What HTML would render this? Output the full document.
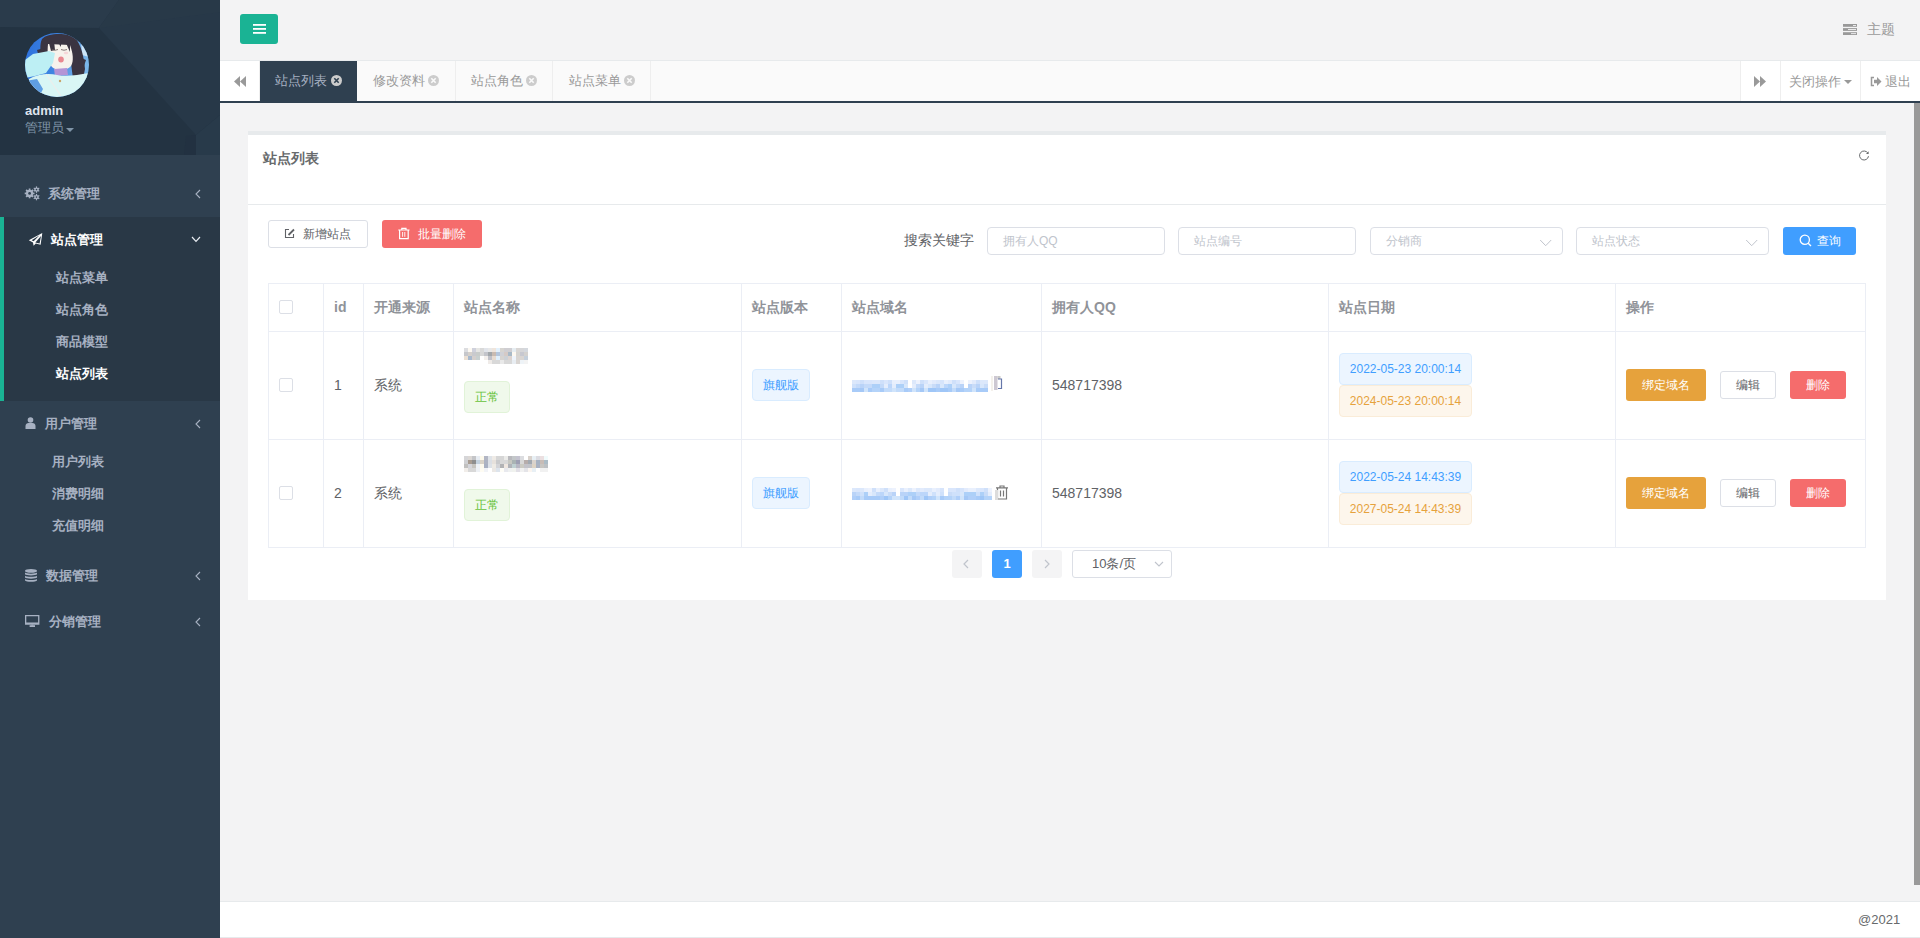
<!DOCTYPE html>
<html><head><meta charset="utf-8"><title>站点列表</title>
<style>
*{box-sizing:border-box;margin:0;padding:0}
html,body{width:1920px;height:938px;overflow:hidden}
body{position:relative;background:#f3f3f4;font-family:"Liberation Sans",sans-serif;font-size:13px;color:#676a6c}
.abs{position:absolute}
/* sidebar */
#side{position:absolute;left:0;top:0;width:220px;height:938px;background:#2f4050}
#navhead{position:absolute;left:0;top:0;width:220px;height:155px;background:#243240;overflow:hidden}
.menu{position:absolute;left:0;width:220px;color:#a7b1c2;font-weight:bold;font-size:13px;line-height:16px;white-space:nowrap}
.sub{position:absolute;color:#a7b1c2;font-weight:bold;font-size:13px;line-height:16px;white-space:nowrap}
.arr{position:absolute;left:194px;width:8px;height:10px}
/* top */
#topbar{position:absolute;left:220px;top:0;width:1700px;height:61px;background:#f3f3f4;border-bottom:1px solid #e7eaec}
#tabs{position:absolute;left:220px;top:61px;width:1700px;height:42px;background:#fafafa;border-bottom:2px solid #2f4050}
.tab{position:absolute;top:0;height:40px;line-height:40px;color:#999;font-size:13px;border-right:1px solid #eee;white-space:nowrap}
#card{position:absolute;left:248px;top:131px;width:1638px;height:469px;background:#fff;border-top:4px solid #e7eaec}
#footer{position:absolute;left:220px;top:901px;width:1700px;height:37px;background:#fff;border-top:1px solid #e7eaec}
.btn{position:absolute;border-radius:3px;font-size:12px;text-align:center;white-space:nowrap}
.inp{position:absolute;top:227px;height:28px;border:1px solid #dcdfe6;border-radius:4px;background:#fff;color:#c0c4cc;font-size:12px;line-height:26px;padding-left:15px;white-space:nowrap}
.hl{position:absolute;background:#ebeef5}
.th{position:absolute;top:299px;font-weight:bold;color:#909399;font-size:14px;line-height:16px;white-space:nowrap}
.td{position:absolute;color:#606266;font-size:14px;line-height:16px;white-space:nowrap}
.cb{position:absolute;left:279px;width:14px;height:14px;border:1px solid #dcdfe6;border-radius:2px;background:#fff}
.tag{position:absolute;height:32px;line-height:30px;border:1px solid;border-radius:4px;font-size:12px;text-align:center;white-space:nowrap}
.tb{background:#ecf5ff;border-color:#d9ecff;color:#409eff}
.tw{background:#fdf6ec;border-color:#faecd8;color:#e6a23c}
.tg{background:#f0f9eb;border-color:#e1f3d8;color:#67c23a}
</style></head><body>

<div id="side">
  <div id="navhead">
    <svg class="abs" style="left:0;top:0" width="220" height="155" viewBox="0 0 220 155">
      <rect width="220" height="155" fill="#233342"/>
      <polygon points="0,0 119,0 99,28 0,27" fill="#2a3b4b"/>
      <polygon points="119,0 220,0 220,115 196,135 99,28" fill="#273848"/>
      <polygon points="119,0 220,0 220,12 99,28" fill="#293a4a" opacity="0.6"/>
      
      <polygon points="196,135 220,115 220,155 196,155" fill="#283a4a"/>
      <polygon points="186,136 196,135 196,155 184,155" fill="#223141"/>
    </svg>
    <svg class="abs" style="left:25px;top:33px" width="64" height="64" viewBox="0 0 64 64">
      <defs><clipPath id="cc"><circle cx="32" cy="32" r="32"/></clipPath>
      <linearGradient id="sky" x1="0" y1="0" x2="1" y2="0.2"><stop offset="0" stop-color="#2b6fdc"/><stop offset="0.55" stop-color="#3f86e2"/><stop offset="1" stop-color="#7ab6ea"/></linearGradient></defs>
      <g clip-path="url(#cc)">
        <rect width="64" height="64" fill="url(#sky)"/>
        <path d="M56,8 L64,6 L64,24 L57,22Z" fill="#e4f2fa" opacity="0.8"/>
        <path d="M17,6 C22,0 42,-1 50,5 C56,11 59,24 60,36 L58,46 L48,46 C47,38 46,30 45,24 L44,14 L26,12 C24,16 22,20 21,24 L16,24 C15,17 15,10 17,6Z" fill="#3a3441"/>
        <path d="M12,17 L19,15 L21,22 L14,24Z" fill="#3a3441"/>
        <path d="M54,24 L61,27 L59,33 L53,30Z" fill="#3a3441"/>
        <path d="M23,11 L45,12 C48,20 49,28 46,33 C42,38 31,38 27,34 C23,29 22,20 23,11Z" fill="#f7f2ec"/>
        <path d="M24,10 L29,8 L30,17 L26,18Z M33,8 L37,8 L35.5,14Z M41,10 L45,11 L45,19Z" fill="#3a3441"/>
        <path d="M27,16.5 Q30,18 33,16.5 M36,16.5 Q39,18 42,16.5" stroke="#6a5a5a" stroke-width="0.8" fill="none"/>
        <ellipse cx="41" cy="20" rx="2.2" ry="1.2" fill="#f6d6d8"/>
        <ellipse cx="36" cy="26.5" rx="2.8" ry="3" fill="#e98890"/>
        <path d="M29,36 L42,35 L43,42 L30,43Z" fill="#b495d6"/>
        <path d="M4,46 C12,41 24,40 32,42 C42,44 52,42 64,40 L64,64 L0,64Z" fill="#d9f6f5"/>
        <path d="M0,48 L12,46 L18,56 L14,64 L0,64Z" fill="#5f9ee3"/>
        <path d="M6,55 L18,61 L13,64 L5,61Z" fill="#f4fbfc"/>
        <path d="M0,27 L8,21 L24,18 L30,20 L28,30 L21,40 L10,43 L0,45Z" fill="#bdeff4"/>
        <path d="M21,41 L36,63" stroke="#eceeec" stroke-width="1.3"/>
        <circle cx="35" cy="48" r="1.2" fill="#c9a46a"/>
      </g>
    </svg>
    <div class="abs" style="left:25px;top:103px;color:#dfe4ed;font-weight:bold;font-size:13px;line-height:16px">admin</div>
    <div class="abs" style="left:25px;top:120px;color:#8095a8;font-size:13px;line-height:16px">管理员</div>
    <div class="abs" style="left:66px;top:128px;width:0;height:0;border-left:4px solid transparent;border-right:4px solid transparent;border-top:4px solid #8095a8"></div>
  </div>
  <!-- 系统管理 -->
  <svg class="abs" style="left:24px;top:186px" width="17" height="16" viewBox="0 0 17 16"><circle cx="5.6" cy="7.4" r="3.6" fill="#a7b1c2"/><rect x="4.75" y="2.50" width="1.7" height="2.10" fill="#a7b1c2" transform="rotate(0.0 5.6 7.4)"/><rect x="4.75" y="2.50" width="1.7" height="2.10" fill="#a7b1c2" transform="rotate(45.0 5.6 7.4)"/><rect x="4.75" y="2.50" width="1.7" height="2.10" fill="#a7b1c2" transform="rotate(90.0 5.6 7.4)"/><rect x="4.75" y="2.50" width="1.7" height="2.10" fill="#a7b1c2" transform="rotate(135.0 5.6 7.4)"/><rect x="4.75" y="2.50" width="1.7" height="2.10" fill="#a7b1c2" transform="rotate(180.0 5.6 7.4)"/><rect x="4.75" y="2.50" width="1.7" height="2.10" fill="#a7b1c2" transform="rotate(225.0 5.6 7.4)"/><rect x="4.75" y="2.50" width="1.7" height="2.10" fill="#a7b1c2" transform="rotate(270.0 5.6 7.4)"/><rect x="4.75" y="2.50" width="1.7" height="2.10" fill="#a7b1c2" transform="rotate(315.0 5.6 7.4)"/><circle cx="5.6" cy="7.4" r="1.4" fill="#2f4050"/><circle cx="12.5" cy="3.6" r="2.2" fill="#a7b1c2"/><rect x="11.90" y="0.40" width="1.2" height="1.80" fill="#a7b1c2" transform="rotate(0.0 12.5 3.6)"/><rect x="11.90" y="0.40" width="1.2" height="1.80" fill="#a7b1c2" transform="rotate(60.0 12.5 3.6)"/><rect x="11.90" y="0.40" width="1.2" height="1.80" fill="#a7b1c2" transform="rotate(120.0 12.5 3.6)"/><rect x="11.90" y="0.40" width="1.2" height="1.80" fill="#a7b1c2" transform="rotate(180.0 12.5 3.6)"/><rect x="11.90" y="0.40" width="1.2" height="1.80" fill="#a7b1c2" transform="rotate(240.0 12.5 3.6)"/><rect x="11.90" y="0.40" width="1.2" height="1.80" fill="#a7b1c2" transform="rotate(300.0 12.5 3.6)"/><circle cx="12.5" cy="3.6" r="0.8" fill="#2f4050"/><circle cx="12.5" cy="11.1" r="2.2" fill="#a7b1c2"/><rect x="11.90" y="7.90" width="1.2" height="1.80" fill="#a7b1c2" transform="rotate(0.0 12.5 11.1)"/><rect x="11.90" y="7.90" width="1.2" height="1.80" fill="#a7b1c2" transform="rotate(60.0 12.5 11.1)"/><rect x="11.90" y="7.90" width="1.2" height="1.80" fill="#a7b1c2" transform="rotate(120.0 12.5 11.1)"/><rect x="11.90" y="7.90" width="1.2" height="1.80" fill="#a7b1c2" transform="rotate(180.0 12.5 11.1)"/><rect x="11.90" y="7.90" width="1.2" height="1.80" fill="#a7b1c2" transform="rotate(240.0 12.5 11.1)"/><rect x="11.90" y="7.90" width="1.2" height="1.80" fill="#a7b1c2" transform="rotate(300.0 12.5 11.1)"/><circle cx="12.5" cy="11.1" r="0.8" fill="#2f4050"/></svg>
  <div class="menu" style="left:48px;top:186px">系统管理</div>
  <svg class="arr" style="top:189px" viewBox="0 0 8 10"><path d="M6,1 L2,5 L6,9" stroke="#a7b1c2" stroke-width="1.1" fill="none"/></svg>
  <!-- active -->
  <div class="abs" style="left:0;top:217px;width:220px;height:184px;background:#293846;border-left:4px solid #1ab394"></div>
  <svg class="abs" style="left:27px;top:231px" width="17" height="17" viewBox="0 0 17 17"><path d="M15.3,2 L1.8,9.3 L6,11.4 L6.6,14.8 L8.8,12.6 L13.6,13.8 Z" fill="#fff"/><path d="M14,5 L8.3,11.6 L12.6,12.5 Z M12.6,4.2 L4.6,9.2 L6.6,10.2 Z" fill="#293846"/></svg>
  <div class="menu" style="left:51px;top:232px;color:#fff">站点管理</div>
  <svg class="abs" style="top:236px;left:191px" width="10" height="7" viewBox="0 0 10 7"><path d="M1,1 L5,5.3 L9,1" stroke="#e8ecf2" stroke-width="1.2" fill="none"/></svg>
  <div class="sub" style="left:56px;top:270px">站点菜单</div>
  <div class="sub" style="left:56px;top:302px">站点角色</div>
  <div class="sub" style="left:56px;top:334px">商品模型</div>
  <div class="sub" style="left:56px;top:366px;color:#fff">站点列表</div>
  <!-- 用户管理 -->
  <svg class="abs" style="left:25px;top:417px" width="11" height="12" viewBox="0 0 11 12"><circle cx="5.5" cy="3" r="2.8" fill="#a7b1c2"/><path d="M0.5,12 L0.5,9 C0.5,7 2,6 3.5,6 L7.5,6 C9,6 10.5,7 10.5,9 L10.5,12Z" fill="#a7b1c2"/></svg>
  <div class="menu" style="left:45px;top:416px">用户管理</div>
  <svg class="arr" style="top:419px" viewBox="0 0 8 10"><path d="M6,1 L2,5 L6,9" stroke="#a7b1c2" stroke-width="1.1" fill="none"/></svg>
  <div class="sub" style="left:52px;top:454px">用户列表</div>
  <div class="sub" style="left:52px;top:486px">消费明细</div>
  <div class="sub" style="left:52px;top:518px">充值明细</div>
  <!-- 数据管理 -->
  <svg class="abs" style="left:25px;top:569px" width="12" height="13" viewBox="0 0 12 13"><g fill="#a7b1c2"><ellipse cx="6" cy="1.9" rx="6" ry="1.9"/><path d="M0,3.6 C1,5 11,5 12,3.6 V5.3 C11,6.8 1,6.8 0,5.3Z"/><path d="M0,6.8 C1,8.2 11,8.2 12,6.8 V8.5 C11,10 1,10 0,8.5Z"/><path d="M0,10 C1,11.4 11,11.4 12,10 V11.4 C11,13.2 1,13.2 0,11.4Z"/></g></svg>
  <div class="menu" style="left:46px;top:568px">数据管理</div>
  <svg class="arr" style="top:571px" viewBox="0 0 8 10"><path d="M6,1 L2,5 L6,9" stroke="#a7b1c2" stroke-width="1.1" fill="none"/></svg>
  <!-- 分销管理 -->
  <svg class="abs" style="left:25px;top:615px" width="15" height="12" viewBox="0 0 15 12"><path d="M0,0 H14.4 V9.8 H0Z M1.3,1.3 V7.6 H13.1 V1.3Z" fill="#a7b1c2" fill-rule="evenodd"/><rect x="4.6" y="10.2" width="5.4" height="1.8" fill="#a7b1c2"/><rect x="6.3" y="9.6" width="2" height="1" fill="#a7b1c2"/></svg>
  <div class="menu" style="left:49px;top:614px">分销管理</div>
  <svg class="arr" style="top:617px" viewBox="0 0 8 10"><path d="M6,1 L2,5 L6,9" stroke="#a7b1c2" stroke-width="1.1" fill="none"/></svg>
</div>

<div id="topbar">
  <div class="abs" style="left:20px;top:14px;width:38px;height:30px;background:#1ab394;border-radius:3px"></div>
  <svg class="abs" style="left:33px;top:23px" width="13" height="11" viewBox="0 0 13 11"><g fill="#fff"><rect x="0" y="1" width="13" height="1.8"/><rect x="0" y="5" width="13" height="1.8"/><rect x="0" y="9" width="13" height="1.8"/></g></svg>
  <svg class="abs" style="left:1623px;top:24px" width="14" height="11" viewBox="0 0 14 11"><g fill="#999"><rect x="0" y="0" width="14" height="2.8"/><rect x="0" y="4.1" width="14" height="2.8"/><rect x="0" y="8.2" width="14" height="2.8"/></g><g fill="#f3f3f4"><rect x="10" y="1" width="3" height="0.9"/><rect x="5" y="5.1" width="8" height="0.9"/><rect x="8" y="9.2" width="5" height="0.9"/></g></svg>
  <div class="abs" style="left:1647px;top:21px;color:#999;font-size:14px;line-height:16px">主题</div>
</div>
<div id="tabs">
  <div class="abs" style="left:0;top:0;width:40px;height:40px;background:#fff;border-right:1px solid #eee"></div>
  <svg class="abs" style="left:14px;top:15px" width="12" height="11" viewBox="0 0 12 11"><g fill="#999"><path d="M6,0 V11 L0,5.5Z"/><path d="M12,0 V11 L6,5.5Z"/></g></svg>
  <div class="tab" style="left:40px;width:97px;background:#2f4050;color:#a7b1c2;padding-left:15px;border-right:none">站点列表</div>
  <svg class="abs" style="left:111px;top:14px" width="11" height="11" viewBox="0 0 11 11"><circle cx="5.5" cy="5.5" r="5.5" fill="#ccc"/><path d="M3.3,3.3 L7.7,7.7 M7.7,3.3 L3.3,7.7" stroke="#2f4050" stroke-width="1.6"/></svg>
  <div class="tab" style="left:137px;width:99px;padding-left:16px">修改资料</div>
  <svg class="abs" style="left:208px;top:14px" width="11" height="11" viewBox="0 0 11 11"><circle cx="5.5" cy="5.5" r="5.5" fill="#ccc"/><path d="M3.3,3.3 L7.7,7.7 M7.7,3.3 L3.3,7.7" stroke="#fafafa" stroke-width="1.6"/></svg>
  <div class="tab" style="left:236px;width:97px;padding-left:15px">站点角色</div>
  <svg class="abs" style="left:306px;top:14px" width="11" height="11" viewBox="0 0 11 11"><circle cx="5.5" cy="5.5" r="5.5" fill="#ccc"/><path d="M3.3,3.3 L7.7,7.7 M7.7,3.3 L3.3,7.7" stroke="#fafafa" stroke-width="1.6"/></svg>
  <div class="tab" style="left:333px;width:98px;padding-left:16px">站点菜单</div>
  <svg class="abs" style="left:404px;top:14px" width="11" height="11" viewBox="0 0 11 11"><circle cx="5.5" cy="5.5" r="5.5" fill="#ccc"/><path d="M3.3,3.3 L7.7,7.7 M7.7,3.3 L3.3,7.7" stroke="#fafafa" stroke-width="1.6"/></svg>
  <div class="abs" style="left:1520px;top:0;width:180px;height:40px;background:#fff;border-left:1px solid #eee"></div>
  <div class="abs" style="left:1560px;top:0;width:1px;height:40px;background:#eee"></div>
  <div class="abs" style="left:1640px;top:0;width:1px;height:40px;background:#eee"></div>
  <svg class="abs" style="left:1534px;top:15px" width="12" height="11" viewBox="0 0 12 11"><g fill="#999"><path d="M0,0 V11 L6,5.5Z"/><path d="M6,0 V11 L12,5.5Z"/></g></svg>
  <div class="abs" style="left:1569px;top:13px;color:#999;font-size:13px;line-height:16px">关闭操作</div>
  <div class="abs" style="left:1624px;top:19px;width:0;height:0;border-left:4px solid transparent;border-right:4px solid transparent;border-top:4px solid #999"></div>
  <svg class="abs" style="left:1650px;top:15px" width="12" height="11" viewBox="0 0 12 11"><path d="M4,1.5 H1.5 V9.5 H4" stroke="#999" stroke-width="1.5" fill="none"/><path d="M4,3.8 H7 V1 L11.5,5.5 L7,10 V7.2 H4Z" fill="#999"/></svg>
  <div class="abs" style="left:1665px;top:13px;color:#999;font-size:13px;line-height:16px">退出</div>
</div>
<div class="abs" style="left:1914px;top:103px;width:6px;height:782px;background:#999"></div>

<div id="card">
  <div class="abs" style="left:15px;top:15px;font-weight:bold;font-size:14px;line-height:16px;color:#676a6c">站点列表</div>
  <svg class="abs" style="left:1611px;top:15px" width="11" height="11" viewBox="0 0 11 11"><path d="M8.8,3 A4.5,4.5 0 1 0 9.5,6.2" stroke="#676a6c" stroke-width="1" fill="none"/><path d="M9.6,1.2 V4 H7Z" fill="#676a6c"/></svg>
</div>
<div class="abs" style="left:248px;top:204px;width:1638px;height:1px;background:#e7eaec"></div>

<!-- toolbar -->
<div class="btn" style="left:268px;top:220px;width:100px;height:28px;border:1px solid #dcdfe6;background:#fff;color:#606266;line-height:26px;padding-left:18px">新增站点</div>
<svg class="abs" style="left:284px;top:228px" width="12" height="11" viewBox="0 0 12 11"><path d="M5,1.5 H1.5 V9.5 H9.5 V6" stroke="#606266" stroke-width="1.1" fill="none"/><path d="M4.5,7 L10,1.5" stroke="#606266" stroke-width="1.8"/></svg>
<div class="btn" style="left:382px;top:220px;width:100px;height:28px;background:#f56c6c;color:#fff;line-height:28px;padding-left:19px">批量删除</div>
<svg class="abs" style="left:398px;top:227px" width="12" height="13" viewBox="0 0 12 13"><path d="M0.3,3 H11.5 M3.8,2.8 V1.3 H8 V2.8 M1.6,3 V11.6 H10.2 V3" stroke="#fff" stroke-width="1.2" fill="none"/><path d="M4.6,5 V9.8 M6.8,5 V9.8" stroke="#fff" stroke-width="0.9"/></svg>

<div class="abs" style="left:904px;top:232px;color:#606266;font-size:14px;line-height:16px">搜索关键字</div>
<div class="inp" style="left:987px;width:178px">拥有人QQ</div>
<div class="inp" style="left:1178px;width:178px">站点编号</div>
<div class="inp" style="left:1370px;width:193px">分销商</div>
<svg class="abs" style="left:1539px;top:239px" width="13" height="8" viewBox="0 0 13 8"><path d="M1.2,1 L6.7,6.7 L12.2,1" stroke="#c0c4cc" stroke-width="1" fill="none"/></svg>
<div class="inp" style="left:1576px;width:193px">站点状态</div>
<svg class="abs" style="left:1745px;top:239px" width="13" height="8" viewBox="0 0 13 8"><path d="M1.2,1 L6.7,6.7 L12.2,1" stroke="#c0c4cc" stroke-width="1" fill="none"/></svg>
<div class="btn" style="left:1783px;top:227px;width:73px;height:28px;background:#409eff;color:#fff;line-height:28px;padding-left:18px">查询</div>
<svg class="abs" style="left:1799px;top:234px" width="13" height="13" viewBox="0 0 13 13"><circle cx="5.8" cy="5.8" r="4.6" stroke="#fff" stroke-width="1.3" fill="none"/><path d="M9.2,9.2 L12,12" stroke="#fff" stroke-width="1.3"/></svg>

<!-- table -->
<div class="hl" style="left:268px;top:283px;width:1598px;height:1px"></div>
<div class="hl" style="left:268px;top:331px;width:1598px;height:1px"></div>
<div class="hl" style="left:268px;top:439px;width:1598px;height:1px"></div>
<div class="hl" style="left:268px;top:547px;width:1598px;height:1px"></div>
<div class="hl" style="left:268px;top:283px;width:1px;height:265px"></div>
<div class="hl" style="left:323px;top:283px;width:1px;height:265px"></div>
<div class="hl" style="left:363px;top:283px;width:1px;height:265px"></div>
<div class="hl" style="left:453px;top:283px;width:1px;height:265px"></div>
<div class="hl" style="left:741px;top:283px;width:1px;height:265px"></div>
<div class="hl" style="left:841px;top:283px;width:1px;height:265px"></div>
<div class="hl" style="left:1041px;top:283px;width:1px;height:265px"></div>
<div class="hl" style="left:1328px;top:283px;width:1px;height:265px"></div>
<div class="hl" style="left:1615px;top:283px;width:1px;height:265px"></div>
<div class="hl" style="left:1865px;top:283px;width:1px;height:265px"></div>

<div class="cb" style="top:300px"></div>
<div class="th" style="left:334px">id</div>
<div class="th" style="left:374px">开通来源</div>
<div class="th" style="left:464px">站点名称</div>
<div class="th" style="left:752px">站点版本</div>
<div class="th" style="left:852px">站点域名</div>
<div class="th" style="left:1052px">拥有人QQ</div>
<div class="th" style="left:1339px">站点日期</div>
<div class="th" style="left:1626px">操作</div>

<div class="cb" style="top:378px"></div>
<div class="td" style="left:334px;top:377px">1</div>
<div class="td" style="left:374px;top:377px">系统</div>
<div class="tag tg" style="left:464px;top:381px;width:46px">正常</div>
<div class="tag tb" style="left:752px;top:369px;width:58px">旗舰版</div>
<div class="td" style="left:1052px;top:377px">548717398</div>
<div class="tag tb" style="left:1339px;top:353px;width:133px">2022-05-23 20:00:14</div>
<div class="tag tw" style="left:1339px;top:385px;width:133px">2024-05-23 20:00:14</div>
<div class="btn" style="left:1626px;top:369px;width:80px;height:32px;background:#e6a23c;color:#fff;line-height:32px">绑定域名</div>
<div class="btn" style="left:1720px;top:371px;width:56px;height:28px;background:#fff;border:1px solid #dcdfe6;color:#606266;line-height:26px">编辑</div>
<div class="btn" style="left:1790px;top:371px;width:56px;height:28px;background:#f56c6c;color:#fff;line-height:28px">删除</div>

<div class="cb" style="top:486px"></div>
<div class="td" style="left:334px;top:485px">2</div>
<div class="td" style="left:374px;top:485px">系统</div>
<div class="tag tg" style="left:464px;top:489px;width:46px">正常</div>
<div class="tag tb" style="left:752px;top:477px;width:58px">旗舰版</div>
<div class="td" style="left:1052px;top:485px">548717398</div>
<div class="tag tb" style="left:1339px;top:461px;width:133px">2022-05-24 14:43:39</div>
<div class="tag tw" style="left:1339px;top:493px;width:133px">2027-05-24 14:43:39</div>
<div class="btn" style="left:1626px;top:477px;width:80px;height:32px;background:#e6a23c;color:#fff;line-height:32px">绑定域名</div>
<div class="btn" style="left:1720px;top:479px;width:56px;height:28px;background:#fff;border:1px solid #dcdfe6;color:#606266;line-height:26px">编辑</div>
<div class="btn" style="left:1790px;top:479px;width:56px;height:28px;background:#f56c6c;color:#fff;line-height:28px">删除</div>

<!-- mosaics -->
<svg class="abs" style="left:464px;top:348px" width="64" height="16" viewBox="0 0 64 16" shape-rendering="crispEdges"><rect x="0" y="0" width="4" height="4" fill="#dcdde0"/><rect x="4" y="0" width="4" height="4" fill="#fdf9f2"/><rect x="8" y="0" width="4" height="4" fill="#cfd1dc"/><rect x="12" y="0" width="4" height="4" fill="#e6e6e4"/><rect x="16" y="0" width="4" height="4" fill="#d9d9d9"/><rect x="20" y="0" width="4" height="4" fill="#e1e4ea"/><rect x="24" y="0" width="4" height="4" fill="#e8e8e8"/><rect x="28" y="0" width="4" height="4" fill="#efe5dc"/><rect x="32" y="0" width="4" height="4" fill="#e3f1fc"/><rect x="36" y="0" width="4" height="4" fill="#d6d4d0"/><rect x="40" y="0" width="4" height="4" fill="#cfced2"/><rect x="44" y="0" width="4" height="4" fill="#cfced2"/><rect x="48" y="0" width="4" height="4" fill="#e6edf2"/><rect x="52" y="0" width="4" height="4" fill="#d9d6d4"/><rect x="56" y="0" width="4" height="4" fill="#d6d6d8"/><rect x="60" y="0" width="4" height="4" fill="#d4d8de"/><rect x="0" y="4" width="4" height="4" fill="#c6c7cb"/><rect x="4" y="4" width="4" height="4" fill="#d5d0cb"/><rect x="8" y="4" width="4" height="4" fill="#c9cace"/><rect x="12" y="4" width="4" height="4" fill="#c8ccca"/><rect x="16" y="4" width="4" height="4" fill="#d7d7d7"/><rect x="20" y="4" width="4" height="4" fill="#c3c4ca"/><rect x="24" y="4" width="4" height="4" fill="#a2a7ab"/><rect x="28" y="4" width="4" height="4" fill="#c9bbb1"/><rect x="32" y="4" width="4" height="4" fill="#b4c6dc"/><rect x="36" y="4" width="4" height="4" fill="#d0d1d6"/><rect x="40" y="4" width="4" height="4" fill="#d5cac6"/><rect x="44" y="4" width="4" height="4" fill="#a8b9c7"/><rect x="48" y="4" width="4" height="4" fill="#fdf8f1"/><rect x="52" y="4" width="4" height="4" fill="#d6d4d1"/><rect x="56" y="4" width="4" height="4" fill="#c7c8d0"/><rect x="60" y="4" width="4" height="4" fill="#d3d1cf"/><rect x="0" y="8" width="4" height="4" fill="#ece0d3"/><rect x="4" y="8" width="4" height="4" fill="#a7b9ce"/><rect x="8" y="8" width="4" height="4" fill="#d5cfcc"/><rect x="12" y="8" width="4" height="4" fill="#c8d0d0"/><rect x="20" y="8" width="4" height="4" fill="#f3efec"/><rect x="24" y="8" width="4" height="4" fill="#c0c1c9"/><rect x="28" y="8" width="4" height="4" fill="#e7dbd0"/><rect x="32" y="8" width="4" height="4" fill="#dff0fd"/><rect x="36" y="8" width="4" height="4" fill="#d6d3d0"/><rect x="40" y="8" width="4" height="4" fill="#ccd1d6"/><rect x="44" y="8" width="4" height="4" fill="#ddd3cf"/><rect x="48" y="8" width="4" height="4" fill="#eef4fc"/><rect x="52" y="8" width="4" height="4" fill="#d9d5d2"/><rect x="56" y="8" width="4" height="4" fill="#d9d5d2"/><rect x="60" y="8" width="4" height="4" fill="#c4cfdb"/><rect x="24" y="12" width="4" height="4" fill="#efebe8"/><rect x="28" y="12" width="4" height="4" fill="#d8d8d8"/><rect x="32" y="12" width="4" height="4" fill="#d8d8d8"/><rect x="36" y="12" width="4" height="4" fill="#e9e9e9"/><rect x="40" y="12" width="4" height="4" fill="#d8d8d8"/><rect x="44" y="12" width="4" height="4" fill="#d8d8d8"/><rect x="48" y="12" width="4" height="4" fill="#e8edf2"/><rect x="52" y="12" width="4" height="4" fill="#d9d5d2"/><rect x="56" y="12" width="4" height="4" fill="#eef3f7"/><rect x="60" y="12" width="4" height="4" fill="#f3f3f3"/></svg>
<svg class="abs" style="left:464px;top:456px" width="84" height="16" viewBox="0 0 84 16" shape-rendering="crispEdges"><rect x="0" y="0" width="4" height="4" fill="#d6d6d8"/><rect x="4" y="0" width="4" height="4" fill="#dcd8d5"/><rect x="8" y="0" width="4" height="4" fill="#c4c5c8"/><rect x="12" y="0" width="4" height="4" fill="#e8edf3"/><rect x="16" y="0" width="4" height="4" fill="#fdf9ec"/><rect x="20" y="0" width="4" height="4" fill="#b2b6c4"/><rect x="24" y="0" width="4" height="4" fill="#dfe3e8"/><rect x="28" y="0" width="4" height="4" fill="#efebe6"/><rect x="32" y="0" width="4" height="4" fill="#d6d6d6"/><rect x="36" y="0" width="4" height="4" fill="#d6d6d6"/><rect x="40" y="0" width="4" height="4" fill="#ebebe9"/><rect x="44" y="0" width="4" height="4" fill="#b9b9bd"/><rect x="48" y="0" width="4" height="4" fill="#c3c7c9"/><rect x="52" y="0" width="4" height="4" fill="#c4c3cf"/><rect x="56" y="0" width="4" height="4" fill="#dcdde0"/><rect x="64" y="0" width="4" height="4" fill="#d9d2cc"/><rect x="68" y="0" width="4" height="4" fill="#e8f0f5"/><rect x="72" y="0" width="4" height="4" fill="#dcdce2"/><rect x="76" y="0" width="4" height="4" fill="#ebdfe0"/><rect x="80" y="0" width="4" height="4" fill="#f0fbfc"/><rect x="0" y="4" width="4" height="4" fill="#cfd0d3"/><rect x="4" y="4" width="4" height="4" fill="#a89c91"/><rect x="8" y="4" width="4" height="4" fill="#8e8e8e"/><rect x="12" y="4" width="4" height="4" fill="#c3d1de"/><rect x="16" y="4" width="4" height="4" fill="#d9d3c8"/><rect x="20" y="4" width="4" height="4" fill="#adb3c2"/><rect x="24" y="4" width="4" height="4" fill="#dbdfe5"/><rect x="28" y="4" width="4" height="4" fill="#e6e1dc"/><rect x="32" y="4" width="4" height="4" fill="#c9cacc"/><rect x="36" y="4" width="4" height="4" fill="#d8d8d8"/><rect x="40" y="4" width="4" height="4" fill="#d8d8d8"/><rect x="44" y="4" width="4" height="4" fill="#c6c7c1"/><rect x="48" y="4" width="4" height="4" fill="#a9b3b4"/><rect x="52" y="4" width="4" height="4" fill="#9d9fb3"/><rect x="56" y="4" width="4" height="4" fill="#d8d8d8"/><rect x="60" y="4" width="4" height="4" fill="#b7adab"/><rect x="64" y="4" width="4" height="4" fill="#a2a9b1"/><rect x="68" y="4" width="4" height="4" fill="#d9d3cd"/><rect x="72" y="4" width="4" height="4" fill="#a7b2c2"/><rect x="76" y="4" width="4" height="4" fill="#c8bcb6"/><rect x="80" y="4" width="4" height="4" fill="#acbcc6"/><rect x="0" y="8" width="4" height="4" fill="#c1c0bf"/><rect x="4" y="8" width="4" height="4" fill="#d4d5db"/><rect x="8" y="8" width="4" height="4" fill="#c7c5c0"/><rect x="12" y="8" width="4" height="4" fill="#eef2f7"/><rect x="16" y="8" width="4" height="4" fill="#fdfaee"/><rect x="20" y="8" width="4" height="4" fill="#a9b1c3"/><rect x="24" y="8" width="4" height="4" fill="#dde2e8"/><rect x="28" y="8" width="4" height="4" fill="#eeebe5"/><rect x="32" y="8" width="4" height="4" fill="#d3d4d8"/><rect x="36" y="8" width="4" height="4" fill="#b2b3b5"/><rect x="40" y="8" width="4" height="4" fill="#efe7e0"/><rect x="44" y="8" width="4" height="4" fill="#b0b3b9"/><rect x="48" y="8" width="4" height="4" fill="#bfd0d2"/><rect x="52" y="8" width="4" height="4" fill="#b7b7c3"/><rect x="56" y="8" width="4" height="4" fill="#cbcac2"/><rect x="60" y="8" width="4" height="4" fill="#c3c2c9"/><rect x="64" y="8" width="4" height="4" fill="#c1c3c9"/><rect x="68" y="8" width="4" height="4" fill="#ddd3c4"/><rect x="72" y="8" width="4" height="4" fill="#a9b2c3"/><rect x="76" y="8" width="4" height="4" fill="#c7c5c1"/><rect x="80" y="8" width="4" height="4" fill="#bcc0c4"/><rect x="0" y="12" width="4" height="4" fill="#f1ede9"/><rect x="4" y="12" width="4" height="4" fill="#d8d8d8"/><rect x="8" y="12" width="4" height="4" fill="#d8d8d8"/><rect x="12" y="12" width="4" height="4" fill="#eef1f5"/><rect x="16" y="12" width="4" height="4" fill="#fefcf3"/><rect x="20" y="12" width="4" height="4" fill="#f1f3f7"/><rect x="28" y="12" width="4" height="4" fill="#ebe8e5"/><rect x="32" y="12" width="4" height="4" fill="#dde4ec"/><rect x="36" y="12" width="4" height="4" fill="#fefdf7"/><rect x="40" y="12" width="4" height="4" fill="#e8e9ee"/><rect x="44" y="12" width="4" height="4" fill="#eff1f1"/><rect x="48" y="12" width="4" height="4" fill="#f0f2ee"/><rect x="52" y="12" width="4" height="4" fill="#e1dfe6"/><rect x="56" y="12" width="4" height="4" fill="#f1f1f1"/><rect x="60" y="12" width="4" height="4" fill="#e4e4e8"/><rect x="64" y="12" width="4" height="4" fill="#fbf5f0"/><rect x="68" y="12" width="4" height="4" fill="#e8f0f5"/><rect x="76" y="12" width="4" height="4" fill="#f1f1f1"/><rect x="80" y="12" width="4" height="4" fill="#f1f1f1"/></svg>
<svg class="abs" style="left:852px;top:380px" width="136" height="12" viewBox="0 0 136 12" shape-rendering="crispEdges"><rect x="0" y="0" width="4" height="4" fill="#dce8fb"/><rect x="4" y="0" width="4" height="4" fill="#d9e6fc"/><rect x="8" y="0" width="4" height="4" fill="#cfe0fa"/><rect x="12" y="0" width="4" height="4" fill="#d9e6fc"/><rect x="16" y="0" width="4" height="4" fill="#d9e6fc"/><rect x="20" y="0" width="4" height="4" fill="#dce8fb"/><rect x="24" y="0" width="4" height="4" fill="#dce8fb"/><rect x="28" y="0" width="4" height="4" fill="#cfe0fa"/><rect x="32" y="0" width="4" height="4" fill="#d9e6fc"/><rect x="36" y="0" width="4" height="4" fill="#cfe0fa"/><rect x="40" y="0" width="4" height="4" fill="#e9f0fd"/><rect x="44" y="0" width="4" height="4" fill="#e9f0fd"/><rect x="48" y="0" width="4" height="4" fill="#d9e6fc"/><rect x="52" y="0" width="4" height="4" fill="#cfe0fa"/><rect x="60" y="0" width="4" height="4" fill="#dce8fb"/><rect x="64" y="0" width="4" height="4" fill="#edf2fd"/><rect x="68" y="0" width="4" height="4" fill="#cfe0fa"/><rect x="72" y="0" width="4" height="4" fill="#d9e6fc"/><rect x="76" y="0" width="4" height="4" fill="#e9f0fd"/><rect x="80" y="0" width="4" height="4" fill="#e2ebfc"/><rect x="84" y="0" width="4" height="4" fill="#dce8fb"/><rect x="88" y="0" width="4" height="4" fill="#d6e4fb"/><rect x="92" y="0" width="4" height="4" fill="#e9f0fd"/><rect x="96" y="0" width="4" height="4" fill="#e2ebfc"/><rect x="100" y="0" width="4" height="4" fill="#cfe0fa"/><rect x="104" y="0" width="4" height="4" fill="#d9e6fc"/><rect x="108" y="0" width="4" height="4" fill="#edf2fd"/><rect x="116" y="0" width="4" height="4" fill="#edf2fd"/><rect x="120" y="0" width="4" height="4" fill="#e2ebfc"/><rect x="124" y="0" width="4" height="4" fill="#cfe0fa"/><rect x="128" y="0" width="4" height="4" fill="#dce8fb"/><rect x="132" y="0" width="4" height="4" fill="#dce8fb"/><rect x="0" y="4" width="4" height="4" fill="#cfe1fb"/><rect x="4" y="4" width="4" height="4" fill="#c4daf9"/><rect x="8" y="4" width="4" height="4" fill="#b9d3f8"/><rect x="12" y="4" width="4" height="4" fill="#c4daf9"/><rect x="16" y="4" width="4" height="4" fill="#c4daf9"/><rect x="20" y="4" width="4" height="4" fill="#add0f8"/><rect x="24" y="4" width="4" height="4" fill="#add0f8"/><rect x="28" y="4" width="4" height="4" fill="#c4daf9"/><rect x="32" y="4" width="4" height="4" fill="#e4edfc"/><rect x="36" y="4" width="4" height="4" fill="#bcd6fa"/><rect x="40" y="4" width="4" height="4" fill="#e4edfc"/><rect x="44" y="4" width="4" height="4" fill="#add0f8"/><rect x="48" y="4" width="4" height="4" fill="#add0f8"/><rect x="52" y="4" width="4" height="4" fill="#d8e7fb"/><rect x="60" y="4" width="4" height="4" fill="#e4edfc"/><rect x="64" y="4" width="4" height="4" fill="#c4daf9"/><rect x="68" y="4" width="4" height="4" fill="#b9d3f8"/><rect x="72" y="4" width="4" height="4" fill="#e4edfc"/><rect x="76" y="4" width="4" height="4" fill="#d8e7fb"/><rect x="80" y="4" width="4" height="4" fill="#c9dcf8"/><rect x="84" y="4" width="4" height="4" fill="#b9d3f8"/><rect x="88" y="4" width="4" height="4" fill="#d8e7fb"/><rect x="92" y="4" width="4" height="4" fill="#bcd6fa"/><rect x="96" y="4" width="4" height="4" fill="#add0f8"/><rect x="100" y="4" width="4" height="4" fill="#d8e7fb"/><rect x="104" y="4" width="4" height="4" fill="#c4daf9"/><rect x="108" y="4" width="4" height="4" fill="#b9d3f8"/><rect x="116" y="4" width="4" height="4" fill="#b9d3f8"/><rect x="120" y="4" width="4" height="4" fill="#c9dcf8"/><rect x="124" y="4" width="4" height="4" fill="#b9d3f8"/><rect x="128" y="4" width="4" height="4" fill="#d8e7fb"/><rect x="132" y="4" width="4" height="4" fill="#c9dcf8"/><rect x="0" y="8" width="4" height="4" fill="#a8cbf8"/><rect x="4" y="8" width="4" height="4" fill="#a8cbf8"/><rect x="8" y="8" width="4" height="4" fill="#a5c8f6"/><rect x="12" y="8" width="4" height="4" fill="#d0e4fb"/><rect x="16" y="8" width="4" height="4" fill="#a8cbf8"/><rect x="20" y="8" width="4" height="4" fill="#b4d3f9"/><rect x="24" y="8" width="4" height="4" fill="#b4d3f9"/><rect x="28" y="8" width="4" height="4" fill="#a8cbf8"/><rect x="32" y="8" width="4" height="4" fill="#c2dbfa"/><rect x="36" y="8" width="4" height="4" fill="#c2dbfa"/><rect x="40" y="8" width="4" height="4" fill="#d0e4fb"/><rect x="44" y="8" width="4" height="4" fill="#c2dbfa"/><rect x="48" y="8" width="4" height="4" fill="#c2dbfa"/><rect x="52" y="8" width="4" height="4" fill="#a8cbf8"/><rect x="56" y="8" width="4" height="4" fill="#b0cff9"/><rect x="60" y="8" width="4" height="4" fill="#d0e4fb"/><rect x="64" y="8" width="4" height="4" fill="#b4d3f9"/><rect x="68" y="8" width="4" height="4" fill="#a5c8f6"/><rect x="72" y="8" width="4" height="4" fill="#d0e4fb"/><rect x="76" y="8" width="4" height="4" fill="#9fc6f7"/><rect x="80" y="8" width="4" height="4" fill="#9fc6f7"/><rect x="84" y="8" width="4" height="4" fill="#a8cbf8"/><rect x="88" y="8" width="4" height="4" fill="#9fc6f7"/><rect x="92" y="8" width="4" height="4" fill="#9fc6f7"/><rect x="96" y="8" width="4" height="4" fill="#a8cbf8"/><rect x="100" y="8" width="4" height="4" fill="#c2dbfa"/><rect x="104" y="8" width="4" height="4" fill="#a5c8f6"/><rect x="108" y="8" width="4" height="4" fill="#a8cbf8"/><rect x="112" y="8" width="4" height="4" fill="#b4d3f9"/><rect x="116" y="8" width="4" height="4" fill="#b4d3f9"/><rect x="120" y="8" width="4" height="4" fill="#d0e4fb"/><rect x="124" y="8" width="4" height="4" fill="#a8cbf8"/><rect x="128" y="8" width="4" height="4" fill="#a8cbf8"/><rect x="132" y="8" width="4" height="4" fill="#a8cbf8"/></svg>
<svg class="abs" style="left:852px;top:488px" width="140" height="12" viewBox="0 0 140 12" shape-rendering="crispEdges"><rect x="0" y="0" width="4" height="4" fill="#dce8fb"/><rect x="4" y="0" width="4" height="4" fill="#d9e6fc"/><rect x="8" y="0" width="4" height="4" fill="#dce8fb"/><rect x="12" y="0" width="4" height="4" fill="#e9f0fd"/><rect x="16" y="0" width="4" height="4" fill="#edf2fd"/><rect x="20" y="0" width="4" height="4" fill="#cfe0fa"/><rect x="24" y="0" width="4" height="4" fill="#e9f0fd"/><rect x="28" y="0" width="4" height="4" fill="#dce8fb"/><rect x="32" y="0" width="4" height="4" fill="#cfe0fa"/><rect x="36" y="0" width="4" height="4" fill="#e9f0fd"/><rect x="40" y="0" width="4" height="4" fill="#edf2fd"/><rect x="48" y="0" width="4" height="4" fill="#d9e6fc"/><rect x="52" y="0" width="4" height="4" fill="#e9f0fd"/><rect x="56" y="0" width="4" height="4" fill="#dce8fb"/><rect x="60" y="0" width="4" height="4" fill="#edf2fd"/><rect x="64" y="0" width="4" height="4" fill="#dce8fb"/><rect x="68" y="0" width="4" height="4" fill="#e2ebfc"/><rect x="72" y="0" width="4" height="4" fill="#dce8fb"/><rect x="76" y="0" width="4" height="4" fill="#dce8fb"/><rect x="80" y="0" width="4" height="4" fill="#e9f0fd"/><rect x="84" y="0" width="4" height="4" fill="#e2ebfc"/><rect x="88" y="0" width="4" height="4" fill="#d6e4fb"/><rect x="96" y="0" width="4" height="4" fill="#d9e6fc"/><rect x="100" y="0" width="4" height="4" fill="#d9e6fc"/><rect x="104" y="0" width="4" height="4" fill="#cfe0fa"/><rect x="108" y="0" width="4" height="4" fill="#d6e4fb"/><rect x="112" y="0" width="4" height="4" fill="#e2ebfc"/><rect x="116" y="0" width="4" height="4" fill="#e9f0fd"/><rect x="120" y="0" width="4" height="4" fill="#e9f0fd"/><rect x="124" y="0" width="4" height="4" fill="#dce8fb"/><rect x="128" y="0" width="4" height="4" fill="#d9e6fc"/><rect x="132" y="0" width="4" height="4" fill="#cfe0fa"/><rect x="136" y="0" width="4" height="4" fill="#edf2fd"/><rect x="0" y="4" width="4" height="4" fill="#b9d3f8"/><rect x="4" y="4" width="4" height="4" fill="#c4daf9"/><rect x="8" y="4" width="4" height="4" fill="#cfe1fb"/><rect x="12" y="4" width="4" height="4" fill="#add0f8"/><rect x="16" y="4" width="4" height="4" fill="#e4edfc"/><rect x="20" y="4" width="4" height="4" fill="#d8e7fb"/><rect x="24" y="4" width="4" height="4" fill="#c4daf9"/><rect x="28" y="4" width="4" height="4" fill="#bcd6fa"/><rect x="32" y="4" width="4" height="4" fill="#d8e7fb"/><rect x="36" y="4" width="4" height="4" fill="#c9dcf8"/><rect x="40" y="4" width="4" height="4" fill="#b9d3f8"/><rect x="48" y="4" width="4" height="4" fill="#b9d3f8"/><rect x="52" y="4" width="4" height="4" fill="#b9d3f8"/><rect x="56" y="4" width="4" height="4" fill="#add0f8"/><rect x="60" y="4" width="4" height="4" fill="#add0f8"/><rect x="64" y="4" width="4" height="4" fill="#c4daf9"/><rect x="68" y="4" width="4" height="4" fill="#bcd6fa"/><rect x="72" y="4" width="4" height="4" fill="#bcd6fa"/><rect x="76" y="4" width="4" height="4" fill="#e4edfc"/><rect x="80" y="4" width="4" height="4" fill="#cfe1fb"/><rect x="84" y="4" width="4" height="4" fill="#e4edfc"/><rect x="88" y="4" width="4" height="4" fill="#cfe1fb"/><rect x="96" y="4" width="4" height="4" fill="#c9dcf8"/><rect x="100" y="4" width="4" height="4" fill="#cfe1fb"/><rect x="104" y="4" width="4" height="4" fill="#cfe1fb"/><rect x="108" y="4" width="4" height="4" fill="#d8e7fb"/><rect x="112" y="4" width="4" height="4" fill="#add0f8"/><rect x="116" y="4" width="4" height="4" fill="#add0f8"/><rect x="120" y="4" width="4" height="4" fill="#add0f8"/><rect x="124" y="4" width="4" height="4" fill="#cfe1fb"/><rect x="128" y="4" width="4" height="4" fill="#add0f8"/><rect x="132" y="4" width="4" height="4" fill="#c9dcf8"/><rect x="136" y="4" width="4" height="4" fill="#e4edfc"/><rect x="0" y="8" width="4" height="4" fill="#b0cff9"/><rect x="4" y="8" width="4" height="4" fill="#a8cbf8"/><rect x="8" y="8" width="4" height="4" fill="#c2dbfa"/><rect x="12" y="8" width="4" height="4" fill="#a8cbf8"/><rect x="16" y="8" width="4" height="4" fill="#a8cbf8"/><rect x="20" y="8" width="4" height="4" fill="#a8cbf8"/><rect x="24" y="8" width="4" height="4" fill="#a8cbf8"/><rect x="28" y="8" width="4" height="4" fill="#b0cff9"/><rect x="32" y="8" width="4" height="4" fill="#9fc6f7"/><rect x="36" y="8" width="4" height="4" fill="#b4d3f9"/><rect x="40" y="8" width="4" height="4" fill="#d0e4fb"/><rect x="44" y="8" width="4" height="4" fill="#d0e4fb"/><rect x="48" y="8" width="4" height="4" fill="#c2dbfa"/><rect x="52" y="8" width="4" height="4" fill="#9fc6f7"/><rect x="56" y="8" width="4" height="4" fill="#c2dbfa"/><rect x="60" y="8" width="4" height="4" fill="#a5c8f6"/><rect x="64" y="8" width="4" height="4" fill="#b0cff9"/><rect x="68" y="8" width="4" height="4" fill="#c2dbfa"/><rect x="72" y="8" width="4" height="4" fill="#9fc6f7"/><rect x="76" y="8" width="4" height="4" fill="#b0cff9"/><rect x="80" y="8" width="4" height="4" fill="#b4d3f9"/><rect x="84" y="8" width="4" height="4" fill="#d0e4fb"/><rect x="88" y="8" width="4" height="4" fill="#a8cbf8"/><rect x="92" y="8" width="4" height="4" fill="#b4d3f9"/><rect x="96" y="8" width="4" height="4" fill="#b4d3f9"/><rect x="100" y="8" width="4" height="4" fill="#c2dbfa"/><rect x="104" y="8" width="4" height="4" fill="#b0cff9"/><rect x="108" y="8" width="4" height="4" fill="#d0e4fb"/><rect x="112" y="8" width="4" height="4" fill="#a5c8f6"/><rect x="116" y="8" width="4" height="4" fill="#b0cff9"/><rect x="120" y="8" width="4" height="4" fill="#b0cff9"/><rect x="124" y="8" width="4" height="4" fill="#a8cbf8"/><rect x="128" y="8" width="4" height="4" fill="#9fc6f7"/><rect x="132" y="8" width="4" height="4" fill="#b4d3f9"/><rect x="136" y="8" width="4" height="4" fill="#b4d3f9"/></svg>
<svg class="abs" style="left:991px;top:376px" width="12" height="15" viewBox="0 0 12 15"><rect x="0" y="0" width="2" height="15" fill="#f4f1ec"/><rect x="3" y="0" width="3.5" height="14" fill="#cdc8d2"/><rect x="6.5" y="0" width="3" height="3" fill="#c8c8c8"/><path d="M7,3 H10.5 V12.5 H7" stroke="#6677aa" stroke-width="1.2" fill="none"/></svg>
<svg class="abs" style="left:995px;top:485px" width="14" height="15" viewBox="0 0 14 15"><path d="M1,2.8 H13 M5,2.5 V1 H9 V2.5 M2.5,3 V14 H11.5 V3 M5.5,5.5 V11.5 M8.5,5.5 V11.5" stroke="#777" stroke-width="1.2" fill="none"/><rect x="0" y="5" width="3" height="10" fill="#dcdcdc"/></svg>

<!-- pagination -->
<div class="btn" style="left:952px;top:550px;width:30px;height:28px;background:#f4f4f5"></div>
<svg class="abs" style="left:962px;top:559px" width="8" height="10" viewBox="0 0 8 10"><path d="M6,1 L2,5 L6,9" stroke="#c0c4cc" stroke-width="1.2" fill="none"/></svg>
<div class="btn" style="left:992px;top:550px;width:30px;height:28px;background:#409eff;color:#fff;font-weight:bold;font-size:13px;line-height:28px">1</div>
<div class="btn" style="left:1032px;top:550px;width:30px;height:28px;background:#f4f4f5"></div>
<svg class="abs" style="left:1043px;top:559px" width="8" height="10" viewBox="0 0 8 10"><path d="M2,1 L6,5 L2,9" stroke="#c0c4cc" stroke-width="1.2" fill="none"/></svg>
<div class="btn" style="left:1072px;top:550px;width:100px;height:28px;border:1px solid #dcdfe6;background:#fff;color:#606266;font-size:13px;line-height:26px;padding-left:19px;text-align:left">10条/页</div>
<svg class="abs" style="left:1154px;top:561px" width="10" height="7" viewBox="0 0 10 7"><path d="M1,1 L5,5 L9,1" stroke="#c0c4cc" stroke-width="1.1" fill="none"/></svg>


<div id="footer">
  <div class="abs" style="left:1638px;top:10px;color:#676a6c;font-size:13px;line-height:16px">@2021</div>
  <div class="abs" style="left:0;top:35px;width:1700px;height:1px;background:#e7eaec"></div>
</div>

</body></html>
